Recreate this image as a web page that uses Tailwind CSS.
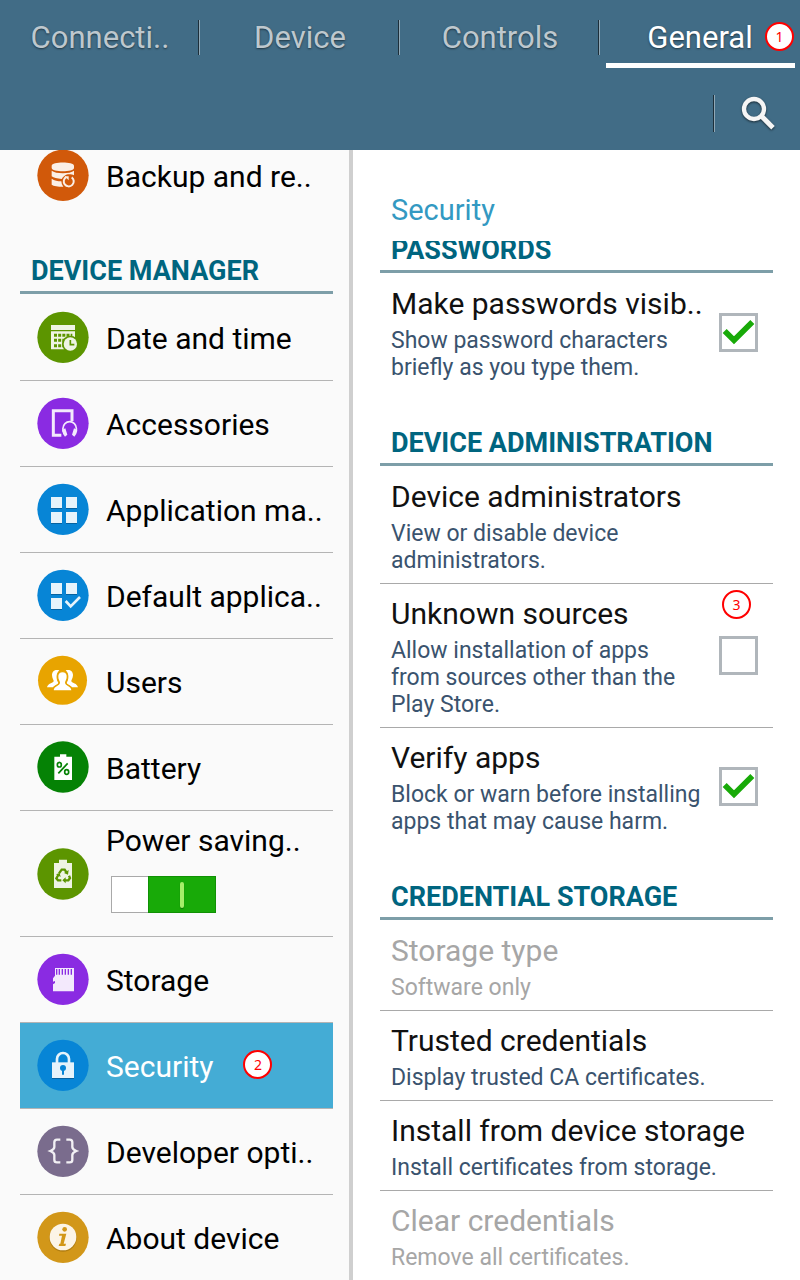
<!DOCTYPE html>
<html lang="en">
<head>
<meta charset="utf-8">
<meta name="viewport" content="width=device-width, initial-scale=1">
<title>Settings</title>
<script src="https://cdn.jsdelivr.net/npm/@tailwindcss/browser@4"></script>
</head>
<body class="flex h-screen flex-col overflow-hidden bg-white font-[Roboto,sans-serif] text-[30px] leading-9 text-black">

<header class="h-[150px] shrink-0 bg-[#416c86]">
  <nav class="grid h-[76px] grid-cols-4 text-[31px] text-[#bec8ce] [text-shadow:0_1px_2px_rgb(0_0_0/0.5)]">
    <a href="#connections" class="relative flex justify-center pt-5">Connecti..<span class="absolute top-5 right-0 h-[35px] w-[2px] border-l border-[#1d2f3a] bg-[#90a8b6]"></span></a>
    <a href="#device" class="relative flex justify-center pt-5">Device<span class="absolute top-5 right-0 h-[35px] w-[2px] border-l border-[#1d2f3a] bg-[#90a8b6]"></span></a>
    <a href="#controls" class="relative flex justify-center pt-5">Controls<span class="absolute top-5 right-0 h-[35px] w-[2px] border-l border-[#1d2f3a] bg-[#90a8b6]"></span></a>
    <a href="#general" aria-current="page" class="relative flex justify-center pt-5 text-white">General
      <span class="absolute top-[63px] right-[5px] left-[6px] h-[5px] bg-white"></span>
      <span class="absolute top-[22px] right-[6px] flex size-[29px] items-center justify-center rounded-full border-2 border-[#f00] bg-white font-['Noto_Sans',sans-serif] text-sm leading-none text-[#f00] [text-shadow:none]">1</span>
    </a>
  </nav>
  <div class="flex h-[74px] items-center justify-end pr-6">
    <span class="mr-[26px] h-[37px] w-[2px] border-l border-[#1d2f3a] bg-[#90a8b6]"></span>
    <button type="button" aria-label="Search">
      <svg class="size-[35px] drop-shadow-[0_1px_1px_rgb(0_0_0/0.6)]" viewBox="0 0 105 105" fill="none" stroke="#f5f5f5"><circle cx="39" cy="39" r="30" stroke-width="13"/><path d="M59 58 L66 65" stroke-width="12"/><path d="M64 63 L96 95" stroke-width="15"/></svg>
    </button>
  </div>
</header>

<div class="grid min-h-0 grow grid-cols-[353fr_447fr]">

<aside class="overflow-hidden border-r-4 border-[#cfcfcf] bg-[#fafafa] pr-4 pl-5">
  <ul class="-mt-[17px]">
    <li><a href="#backup" class="flex h-[86px] items-start gap-[17px] pt-4 pl-[17px]">
      <svg class="size-[52px] shrink-0" viewBox="0 0 156 156"><circle cx="78" cy="79" r="77" fill="#d1590a"/><g fill="#fbefe6"><path d="M44 50C44 37 111 37 111 50V57C111 70 44 70 44 57Z"/><path d="M44 65C56 75 99 75 111 65V79C104 76 91 74 83 80Q77 84 74 90C60 89 50 87 44 82Z"/><path d="M44 89C52 95 62 97 73 97Q73 106 79 113C62 113 50 111 44 107Z"/></g><path d="M88 84A15 15 0 1 0 104 85" fill="none" stroke="#fbefe6" stroke-width="6"/><path d="M83 82H95V94Z" fill="#fbefe6"/></svg>
      <span class="pt-[10px] whitespace-nowrap">Backup and re..</span></a></li>
    <li><h2 class="mb-px h-[75px] border-b-[3px] border-[#7d9ea8] pt-9 pl-[11px] text-[27px] leading-8 font-bold whitespace-nowrap text-[#00657f]">DEVICE MANAGER</h2></li>

    <li class="border-b border-[#b4b4b4]"><a href="#date" class="flex h-[85px] items-start gap-[17px] pt-4 pl-[17px]">
      <svg class="size-[52px] shrink-0" viewBox="0 0 156 156"><circle cx="78" cy="79" r="77" fill="#5c9500"/><path d="M42 42H114V57H42ZM42 61H114V115H42Z" fill="#eef4e4"/><path d="M51 73H106M51 88H90M51 104H80" stroke="#5c9500" stroke-width="9" stroke-dasharray="9 3.5"/><circle cx="100" cy="99" r="25" fill="#5c9500"/><circle cx="100" cy="99" r="20" fill="#eef4e4"/><path d="M100 87V101H112" fill="none" stroke="#5c9500" stroke-width="5"/></svg>
      <span class="pt-[10px]">Date and time</span></a></li>

    <li class="border-b border-[#b4b4b4]"><a href="#accessories" class="flex h-[85px] items-start gap-[17px] pt-4 pl-[17px]">
      <svg class="size-[52px] shrink-0" viewBox="0 0 156 156"><circle cx="78" cy="79" r="77" fill="#8a2be2"/><path d="M105 72V41H49V115H73" fill="none" stroke="#f3e9fc" stroke-width="9"/><path d="M81 108Q76 100 78 94A20 20 0 0 1 118 94Q120 100 115 108" fill="none" stroke="#f3e9fc" stroke-width="5"/><path d="M76 98L85 94L91 113L84 119Q76 110 76 98ZM120 98L111 94L105 113L112 119Q120 110 120 98Z" fill="#f3e9fc"/></svg>
      <span class="pt-[10px]">Accessories</span></a></li>

    <li class="border-b border-[#b4b4b4]"><a href="#applications" class="flex h-[85px] items-start gap-[17px] pt-4 pl-[17px]">
      <svg class="size-[52px] shrink-0" viewBox="0 0 156 156"><circle cx="78" cy="79" r="77" fill="#0785d6"/><path d="M42 45H75V78H42ZM87 45H120V78H87ZM42 90H75V123H42ZM87 90H120V123H87Z" fill="#0562a0"/><path d="M42 42H75V75H42ZM87 42H120V75H87ZM42 87H75V120H42ZM87 87H120V120H87Z" fill="#e6f3fb"/></svg>
      <span class="pt-[10px] whitespace-nowrap">Application ma..</span></a></li>

    <li class="border-b border-[#b4b4b4]"><a href="#defaults" class="flex h-[85px] items-start gap-[17px] pt-4 pl-[17px]">
      <svg class="size-[52px] shrink-0" viewBox="0 0 156 156"><circle cx="78" cy="79" r="77" fill="#0785d6"/><path d="M42 45H75V78H42ZM87 45H120V78H87ZM42 90H75V123H42Z" fill="#0562a0"/><path d="M42 42H75V75H42ZM87 42H120V75H87ZM42 87H75V120H42Z" fill="#e6f3fb"/><path d="M86 96L101 112L129 84" fill="none" stroke="#e6f3fb" stroke-width="8"/></svg>
      <span class="pt-[10px] whitespace-nowrap">Default applica..</span></a></li>

    <li class="border-b border-[#b4b4b4]"><a href="#users" class="flex h-[85px] items-start gap-[17px] pt-4 pl-[17px]">
      <svg class="size-[52px] shrink-0" viewBox="0 0 156 156"><circle cx="76.500" cy="76" r="73.500" fill="#e8a400"/><path d="M67 46C56 42 45 47 45 60C45 70 51 75 50 79C47 85 33 85 30 97H48C54 89 62 90 64 83C58 76 55 56 67 46Z" fill="#fff"/><path d="M86 46C97 42 108 47 108 60C108 70 102 75 103 79C106 85 120 85 123 97H105C99 89 91 90 89 83C95 76 98 56 86 46Z" fill="#fff"/><path d="M76.500 50C67 50 61 56 62 66C62 75 67 79 67 84C66 93 49 90 48 105Q48 108 52 108H102Q106 108 105 105C104 90 87 93 86 84C86 79 91 75 91 66C92 56 86 50 76.500 50Z" fill="#fff" stroke="#e8a400" stroke-width="4"/></svg>
      <span class="pt-[10px]">Users</span></a></li>

    <li class="border-b border-[#b4b4b4]"><a href="#battery" class="flex h-[85px] items-start gap-[17px] pt-4 pl-[17px]">
      <svg class="size-[52px] shrink-0" viewBox="0 0 156 156"><circle cx="78" cy="78" r="77" fill="#058205"/><path d="M52 47H69V40H88V47H105V117H52Z" fill="#fff"/><g fill="none" stroke="#058205" stroke-width="5"><ellipse cx="67" cy="71" rx="6" ry="7"/><ellipse cx="89" cy="93" rx="6" ry="7"/><path d="M92 67L64 97"/></g></svg>
      <span class="pt-[10px]">Battery</span></a></li>

    <li class="flex h-[126px] items-center gap-[17px] border-b border-[#b4b4b4] pl-[17px]">
      <svg class="size-[52px] shrink-0" viewBox="0 0 156 156"><circle cx="78" cy="78" r="77" fill="#5c9500"/><path d="M51 45H66V35H90V45H105V120H51Z" fill="#eef4e4"/><g fill="none" stroke="#5c9500" stroke-width="7"><path d="M66 76L74 65H83L89 74"/><path d="M96 83L99 90L94 97H83"/><path d="M73 97H63L58 91L64 81"/></g><path d="M95 66L93 80L81 75ZM86 88V106L76 97ZM57 79L68 75L71 87Z" fill="#5c9500"/></svg>
      <div class="flex h-full flex-col items-start pt-3">
        <a id="power-label" href="#power" class="whitespace-nowrap">Power saving..</a>
        <button type="button" role="switch" aria-checked="true" aria-labelledby="power-label" class="mt-[17px] ml-[5px] flex h-[37px] w-[105px] border border-[#a9a9a9] bg-white">
          <span class="-my-px -mr-px ml-auto flex h-[37px] w-[68px] items-center justify-center border border-[#109104] bg-[#18aa08]"><span class="h-[26px] w-1 rounded-sm bg-[#a5ee6a] shadow-[0_1px_1px_#0c7404]"></span></span>
        </button>
      </div></li>

    <li class="border-b border-[#b4b4b4]"><a href="#storage" class="flex h-[85px] items-start gap-[17px] pt-4 pl-[17px]">
      <svg class="size-[52px] shrink-0" viewBox="0 0 156 156"><circle cx="78" cy="79" r="77" fill="#8a2be2"/><path d="M54 45H111V115H48V94L54 90V84L48 86V76L54 68Z" fill="#f3e9fc"/><path d="M59 48V65M67 48V65M76 48V65M85 48V65M94 48V65M103 48V65" stroke="#8a2be2" stroke-width="4"/></svg>
      <span class="pt-[10px]">Storage</span></a></li>

    <li class="border-b border-[#b4b4b4]"><a href="#security" aria-current="page" class="flex h-[85px] items-start gap-[17px] bg-[#44acd5] pt-4 pl-[17px] text-white">
      <svg class="size-[52px] shrink-0" viewBox="0 0 156 156"><circle cx="78" cy="79" r="77" fill="#0785d6"/><path d="M45 73H111V120H45Z" fill="#0562a0"/><path d="M60 72V60A18 18 0 0 1 96 60V72" fill="none" stroke="#e6f3fb" stroke-width="8"/><path d="M45 70H111V117H45Z" fill="#e6f3fb"/><circle cx="78" cy="87" r="9" fill="#0785d6"/><path d="M78 88V107" stroke="#0785d6" stroke-width="6"/></svg>
      <span class="pt-[10px]">Security</span>
      <span class="mt-[11px] ml-[13px] flex size-[29px] items-center justify-center rounded-full border-2 border-[#f00] bg-white font-['Noto_Sans',sans-serif] text-sm leading-none text-[#f00]">2</span></a></li>

    <li class="border-b border-[#b4b4b4]"><a href="#developer" class="flex h-[85px] items-start gap-[17px] pt-4 pl-[17px]">
      <svg class="size-[52px] shrink-0" viewBox="0 0 156 156"><circle cx="78" cy="79" r="77" fill="#7a6c8d"/><path d="M70 44H60Q52 44 52 52V66Q52 73 40 78Q52 83 52 90V104Q52 112 60 112H70M88 44H98Q106 44 106 52V66Q106 73 118 78Q106 83 106 90V104Q106 112 98 112H88" fill="none" stroke="#f2f0f4" stroke-width="7"/></svg>
      <span class="pt-[10px] whitespace-nowrap">Developer opti..</span></a></li>

    <li><a href="#about" class="flex h-[85px] items-start gap-[17px] pt-4 pl-[17px]">
      <svg class="size-[52px] shrink-0" viewBox="0 0 156 156"><circle cx="78" cy="79" r="77" fill="#d29719"/><circle cx="78" cy="81" r="41" fill="#b17d10"/><circle cx="78" cy="78" r="40" fill="#fcf4e6"/><circle cx="83" cy="55" r="7" fill="#d29719"/><path d="M67 68H88L80 98H87L85 105H65L67 98H70L75 74H66Z" fill="#d29719"/></svg>
      <span class="pt-[10px]">About device</span></a></li>
  </ul>
</aside>

<main class="flex min-h-0 flex-col overflow-hidden px-[27px] text-[#111]">
  <h1 class="h-[91px] shrink-0 pt-[42px] pl-[11px] text-[29px] text-[#3399c2]">Security</h1>
  <div class="min-h-0 grow overflow-hidden">
    <section class="-mt-[43px]">
      <h2 class="mb-px h-[75px] border-b-[3px] border-[#7d9ea8] pt-9 pl-[11px] text-[27px] leading-8 font-bold text-[#00657f]">PASSWORDS</h2>
      <div class="flex items-center justify-between border-b border-transparent pr-[15px] pl-[11px]">
        <label for="visible" class="pt-3 pb-[9px] whitespace-nowrap">Make passwords visib..<span class="mt-[5px] block text-[23px] leading-[27px] text-[#3a536e]">Show password characters<br>briefly as you type them.</span></label>
        <span class="grid shrink-0">
          <input id="visible" type="checkbox" checked class="peer col-start-1 row-start-1 size-[39px] appearance-none border-[3px] border-[#b0b6bb] bg-white">
          <svg class="pointer-events-none invisible col-start-1 row-start-1 size-[39px] peer-checked:visible" viewBox="0 0 117 117"><path d="M17 54L45 82L100 27" fill="none" stroke="#18aa08" stroke-width="17"/></svg>
        </span>
      </div>
    </section>

    <section>
      <h2 class="mb-px h-[75px] border-b-[3px] border-[#7d9ea8] pt-9 pl-[11px] text-[27px] leading-8 font-bold whitespace-nowrap text-[#00657f]">DEVICE ADMINISTRATION</h2>
      <button type="button" class="block w-full border-b border-[#a9a9a9] pt-3 pb-[9px] pl-[11px] text-left">Device administrators<span class="mt-[5px] block text-[23px] leading-[27px] text-[#3a536e]">View or disable device<br>administrators.</span></button>
      <div class="relative flex items-center justify-between border-b border-[#a9a9a9] pr-[15px] pl-[11px]">
        <label for="unknown" class="pt-3 pb-[9px] whitespace-nowrap">Unknown sources<span class="mt-[5px] block text-[23px] leading-[27px] text-[#3a536e]">Allow installation of apps<br>from sources other than the<br>Play Store.</span></label>
        <input id="unknown" type="checkbox" class="size-[39px] shrink-0 appearance-none border-[3px] border-[#b0b6bb] bg-white">
        <span class="absolute top-[6px] right-[22px] flex size-[29px] items-center justify-center rounded-full border-2 border-[#f00] bg-white font-['Noto_Sans',sans-serif] text-sm leading-none text-[#f00]">3</span>
      </div>
      <div class="flex items-center justify-between border-b border-transparent pr-[15px] pl-[11px]">
        <label for="verify" class="pt-3 pb-[9px] whitespace-nowrap">Verify apps<span class="mt-[5px] block text-[23px] leading-[27px] text-[#3a536e]">Block or warn before installing<br>apps that may cause harm.</span></label>
        <span class="grid shrink-0">
          <input id="verify" type="checkbox" checked class="peer col-start-1 row-start-1 size-[39px] appearance-none border-[3px] border-[#b0b6bb] bg-white">
          <svg class="pointer-events-none invisible col-start-1 row-start-1 size-[39px] peer-checked:visible" viewBox="0 0 117 117"><path d="M17 54L45 82L100 27" fill="none" stroke="#18aa08" stroke-width="17"/></svg>
        </span>
      </div>
    </section>

    <section>
      <h2 class="mb-px h-[75px] border-b-[3px] border-[#7d9ea8] pt-9 pl-[11px] text-[27px] leading-8 font-bold whitespace-nowrap text-[#00657f]">CREDENTIAL STORAGE</h2>
      <button type="button" disabled class="block w-full border-b border-[#a9a9a9] pt-3 pb-[9px] pl-[11px] text-left text-[#a6a6a6]">Storage type<span class="mt-[5px] block text-[23px] leading-[27px]">Software only</span></button>
      <button type="button" class="block w-full border-b border-[#a9a9a9] pt-3 pb-[9px] pl-[11px] text-left whitespace-nowrap">Trusted credentials<span class="mt-[5px] block text-[23px] leading-[27px] text-[#3a536e]">Display trusted CA certificates.</span></button>
      <button type="button" class="block w-full border-b border-[#a9a9a9] pt-3 pb-[9px] pl-[11px] text-left whitespace-nowrap">Install from device storage<span class="mt-[5px] block text-[23px] leading-[27px] text-[#3a536e]">Install certificates from storage.</span></button>
      <button type="button" disabled class="block w-full pt-3 pb-[9px] pl-[11px] text-left whitespace-nowrap text-[#a6a6a6]">Clear credentials<span class="mt-[5px] block text-[23px] leading-[27px]">Remove all certificates.</span></button>
    </section>
  </div>
</main>
</div>
</body>
</html>
